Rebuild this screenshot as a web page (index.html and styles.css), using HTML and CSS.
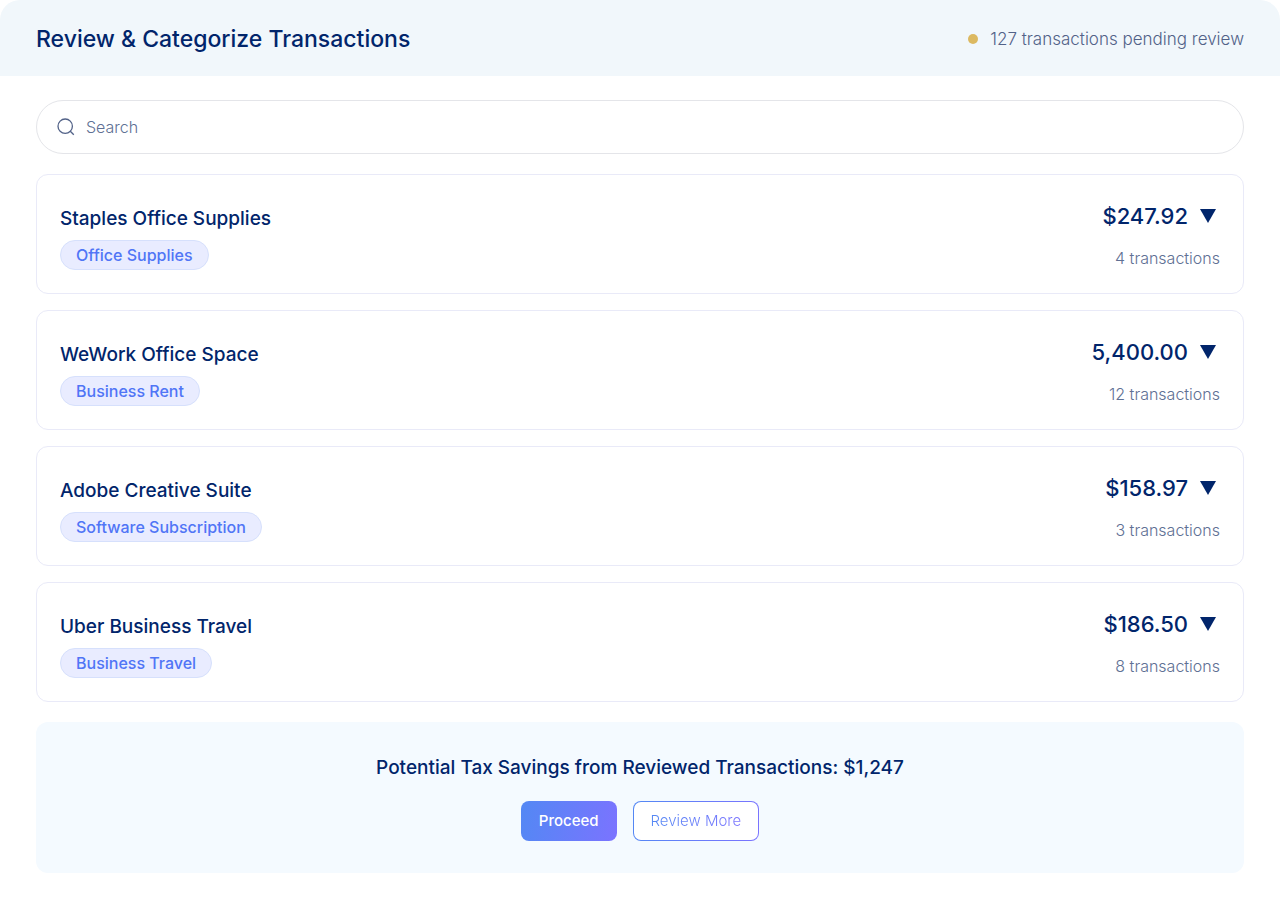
FILE: index.html
```html
<!DOCTYPE html>
<html lang="en">
<head>
<meta charset="utf-8">
<meta name="viewport" content="width=device-width, initial-scale=1">
<title>Review &amp; Categorize Transactions</title>
<link rel="stylesheet" href="styles.css">
</head>
<body>
<header class="header">
  <h1 class="title">Review &amp; Categorize Transactions</h1>
  <p class="status"><span class="dot"></span>127 transactions pending review</p>
</header>
<main class="content">
  <label class="search">
    <svg class="search-icon" viewBox="0 0 18 18" aria-hidden="true"><circle cx="8.2" cy="8.2" r="7.2"/><path d="M13.3 13.3 16.8 16.8"/></svg>
    <input class="search-input" type="search" placeholder="Search" aria-label="Search">
  </label>
  <ul class="list">
    <li class="card">
      <div class="vendor">
        <h2 class="name">Staples Office Supplies</h2>
        <span class="tag">Office Supplies</span>
      </div>
      <div class="summary">
        <button class="amount" type="button">$247.92<svg class="caret" viewBox="0 0 16 14" aria-hidden="true"><path d="M0 0h16L8 14z"/></svg></button>
        <p class="count">4 transactions</p>
      </div>
    </li>
    <li class="card">
      <div class="vendor">
        <h2 class="name">WeWork Office Space</h2>
        <span class="tag">Business Rent</span>
      </div>
      <div class="summary">
        <button class="amount" type="button">5,400.00<svg class="caret" viewBox="0 0 16 14" aria-hidden="true"><path d="M0 0h16L8 14z"/></svg></button>
        <p class="count">12 transactions</p>
      </div>
    </li>
    <li class="card">
      <div class="vendor">
        <h2 class="name">Adobe Creative Suite</h2>
        <span class="tag">Software Subscription</span>
      </div>
      <div class="summary">
        <button class="amount" type="button">$158.97<svg class="caret" viewBox="0 0 16 14" aria-hidden="true"><path d="M0 0h16L8 14z"/></svg></button>
        <p class="count">3 transactions</p>
      </div>
    </li>
    <li class="card">
      <div class="vendor">
        <h2 class="name">Uber Business Travel</h2>
        <span class="tag">Business Travel</span>
      </div>
      <div class="summary">
        <button class="amount" type="button">$186.50<svg class="caret" viewBox="0 0 16 14" aria-hidden="true"><path d="M0 0h16L8 14z"/></svg></button>
        <p class="count">8 transactions</p>
      </div>
    </li>
  </ul>
  <section class="savings">
    <h2 class="name">Potential Tax Savings from Reviewed Transactions: $1,247</h2>
    <div class="actions">
      <button class="button primary" type="button">Proceed</button>
      <button class="button secondary" type="button"><span class="gradient-text">Review More</span></button>
    </div>
  </section>
</main>
</body>
</html>
```
FILE: styles.css
```css
* {
  box-sizing: border-box;
}

body {
  margin: 0;
  background: #fff;
  color: #01256b;
  font-family: Inter, "Liberation Sans", sans-serif;
}

h1, h2, p, ul {
  margin: 0;
  padding: 0;
}

button {
  font-family: inherit;
  cursor: pointer;
}

.header {
  display: flex;
  align-items: center;
  justify-content: space-between;
  padding: 21px 36px 19px;
  border-radius: 20px 20px 0 0;
  background: #f1f7fb;
}

.title {
  font-size: 23px;
  font-weight: 500;
  line-height: 36px;
}

.status {
  display: flex;
  align-items: center;
  gap: 12px;
  color: #526288;
  font-size: 17px;
  font-weight: 300;
  line-height: 24px;
}

.dot {
  width: 10px;
  height: 10px;
  border-radius: 50%;
  background: #dcb961;
}

.content {
  display: flex;
  flex-direction: column;
  gap: 20px;
  padding: 24px 36px;
}

.search {
  display: flex;
  align-items: center;
  gap: 11px;
  height: 54px;
  padding: 0 20px;
  border: 1px solid #e4e5e9;
  border-radius: 27px;
}

.search-icon {
  width: 18px;
  height: 18px;
  fill: none;
  stroke: #526288;
  stroke-width: 1.3;
}

.search-input {
  flex: 1;
  padding: 0;
  border: 0;
  outline: 0;
  background: none;
  color: #526288;
  font-family: inherit;
  font-size: 16px;
  font-weight: 300;
  line-height: 24px;
}

.search-input::placeholder {
  color: #607094;
}

.list {
  display: flex;
  flex-direction: column;
  gap: 16px;
  list-style: none;
}

.card {
  display: flex;
  align-items: center;
  justify-content: space-between;
  min-height: 120px;
  padding: 23px;
  border: 1px solid #e9eaf8;
  border-radius: 12px;
}

.vendor {
  display: flex;
  flex-direction: column;
  align-items: flex-start;
  gap: 6px;
  padding-top: 6px;
}

.name {
  font-size: 19px;
  font-weight: 500;
  line-height: 30px;
}

.tag {
  padding: 2px 15px;
  border: 1px solid #d6e0fc;
  border-radius: 15px;
  background: #e9ecff;
  color: #5075f6;
  font-size: 16px;
  font-weight: 500;
  line-height: 24px;
}

.summary {
  display: flex;
  flex-direction: column;
  align-items: flex-end;
  gap: 12px;
}

.amount {
  display: flex;
  align-items: center;
  gap: 12px;
  padding: 0 4px 0 0;
  border: 0;
  background: none;
  color: inherit;
  font-size: 22px;
  font-weight: 500;
  line-height: 36px;
}

.caret {
  width: 16px;
  height: 14px;
  fill: #01256b;
}

.count {
  color: #607094;
  font-size: 16px;
  font-weight: 300;
  line-height: 24px;
}

.savings {
  display: flex;
  flex-direction: column;
  align-items: center;
  gap: 18px;
  padding: 31px 24px 32px;
  border-radius: 12px;
  background: #f4faff;
}

.actions {
  display: flex;
  gap: 16px;
}

.button {
  height: 40px;
  padding: 0 17px;
  border: 1px solid transparent;
  border-radius: 8px;
  font-size: 15px;
  line-height: 24px;
}

.primary {
  background: linear-gradient(100deg, #5388f4, #7b73ff) border-box;
  color: #fff;
  font-weight: 500;
}

.secondary {
  background:
    linear-gradient(#fff, #fff) padding-box,
    linear-gradient(100deg, #5388f4, #7b73ff) border-box;
  font-weight: 300;
}

.gradient-text {
  background: linear-gradient(100deg, #5388f4, #7b73ff);
  background-clip: text;
  color: transparent;
}
```
